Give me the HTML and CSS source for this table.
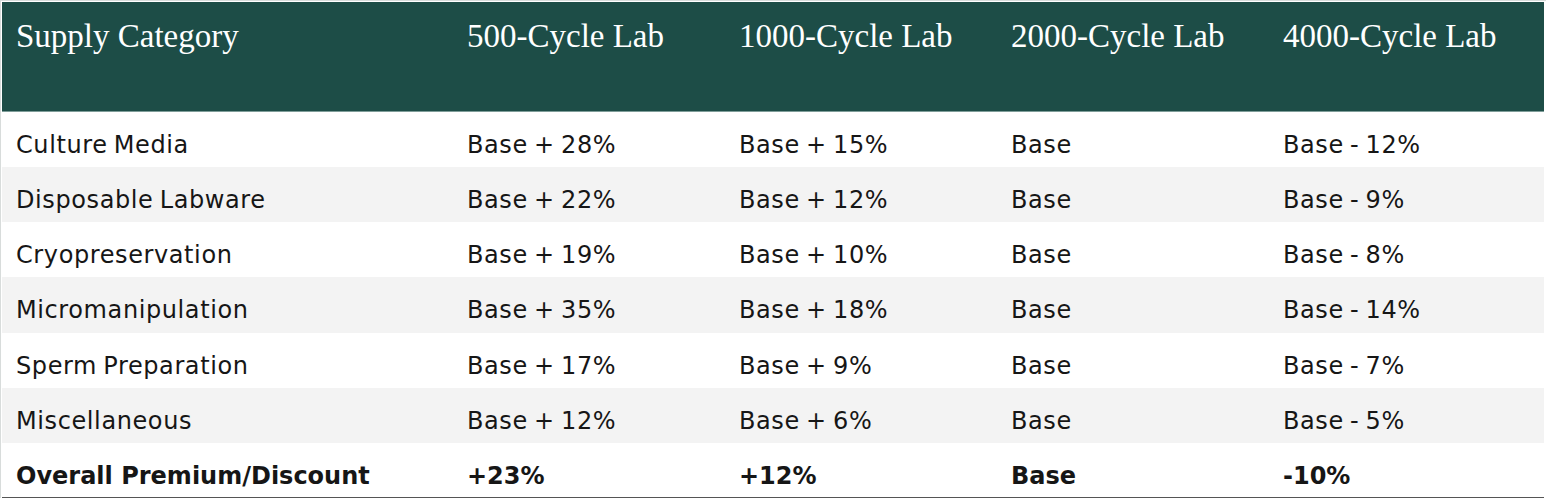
FILE: index.html
```html
<!DOCTYPE html>
<html>
<head>
<meta charset="utf-8">
<link rel="stylesheet" href="styles.css">
</head>
<body>
<div class="frame">
<table class="supply">
<colgroup>
<col class="c-cat"><col class="c-num"><col class="c-num"><col class="c-num"><col class="c-last">
</colgroup>
<thead>
<tr><th>Supply Category</th><th>500-Cycle Lab</th><th>1000-Cycle Lab</th><th>2000-Cycle Lab</th><th>4000-Cycle Lab</th></tr>
</thead>
<tbody>
<tr><td>Culture Media</td><td>Base + 28%</td><td>Base + 15%</td><td>Base</td><td>Base - 12%</td></tr>
<tr class="alt"><td>Disposable Labware</td><td>Base + 22%</td><td>Base + 12%</td><td>Base</td><td>Base - 9%</td></tr>
<tr><td>Cryopreservation</td><td>Base + 19%</td><td>Base + 10%</td><td>Base</td><td>Base - 8%</td></tr>
<tr class="alt"><td>Micromanipulation</td><td>Base + 35%</td><td>Base + 18%</td><td>Base</td><td>Base - 14%</td></tr>
<tr><td>Sperm Preparation</td><td>Base + 17%</td><td>Base + 9%</td><td>Base</td><td>Base - 7%</td></tr>
<tr class="alt"><td>Miscellaneous</td><td>Base + 12%</td><td>Base + 6%</td><td>Base</td><td>Base - 5%</td></tr>
<tr class="total"><td>Overall Premium/Discount</td><td>+23%</td><td>+12%</td><td>Base</td><td>-10%</td></tr>
</tbody>
</table>
</div>
</body>
</html>
```
FILE: styles.css
```css
html, body {
  margin: 0;
  padding: 0;
  background: #ffffff;
}
.frame {
  padding: 2px 2px 0 2px;
  background: #ffffff;
  box-shadow: inset 1px 1px 0 #d8dcdb;
}
.supply {
  width: 1542px;
  border-collapse: collapse;
  table-layout: fixed;
}
.c-cat { width: 451px; }
.c-num { width: 272px; }
.c-last { width: 275px; }
.supply thead th {
  background: #1d4d47;
  color: #ffffff;
  font-family: "Liberation Serif", "DejaVu Serif", serif;
  font-weight: normal;
  font-size: 33px;
  line-height: 38px;
  text-align: left;
  vertical-align: top;
  height: 109px;
  box-sizing: border-box;
  padding: 15px 8px 0 14px;
  border-bottom: 1px solid #7f9d99;
  white-space: nowrap;
}
.supply tbody td {
  font-family: "DejaVu Sans", sans-serif;
  font-size: 24px;
  line-height: 28px;
  letter-spacing: 0.6px;
  word-spacing: -2px;
  color: #161616;
  height: 55.4px;
  box-sizing: border-box;
  padding: 19px 8px 8px 14px;
  vertical-align: top;
  white-space: nowrap;
}
.supply tbody tr.alt td {
  background: #f3f3f3;
}
.supply tbody tr.total td {
  height: 54px;
  padding-bottom: 6px;
  font-weight: bold;
  letter-spacing: 0;
  word-spacing: 0;
  border-bottom: 1px solid #555555;
}
```
